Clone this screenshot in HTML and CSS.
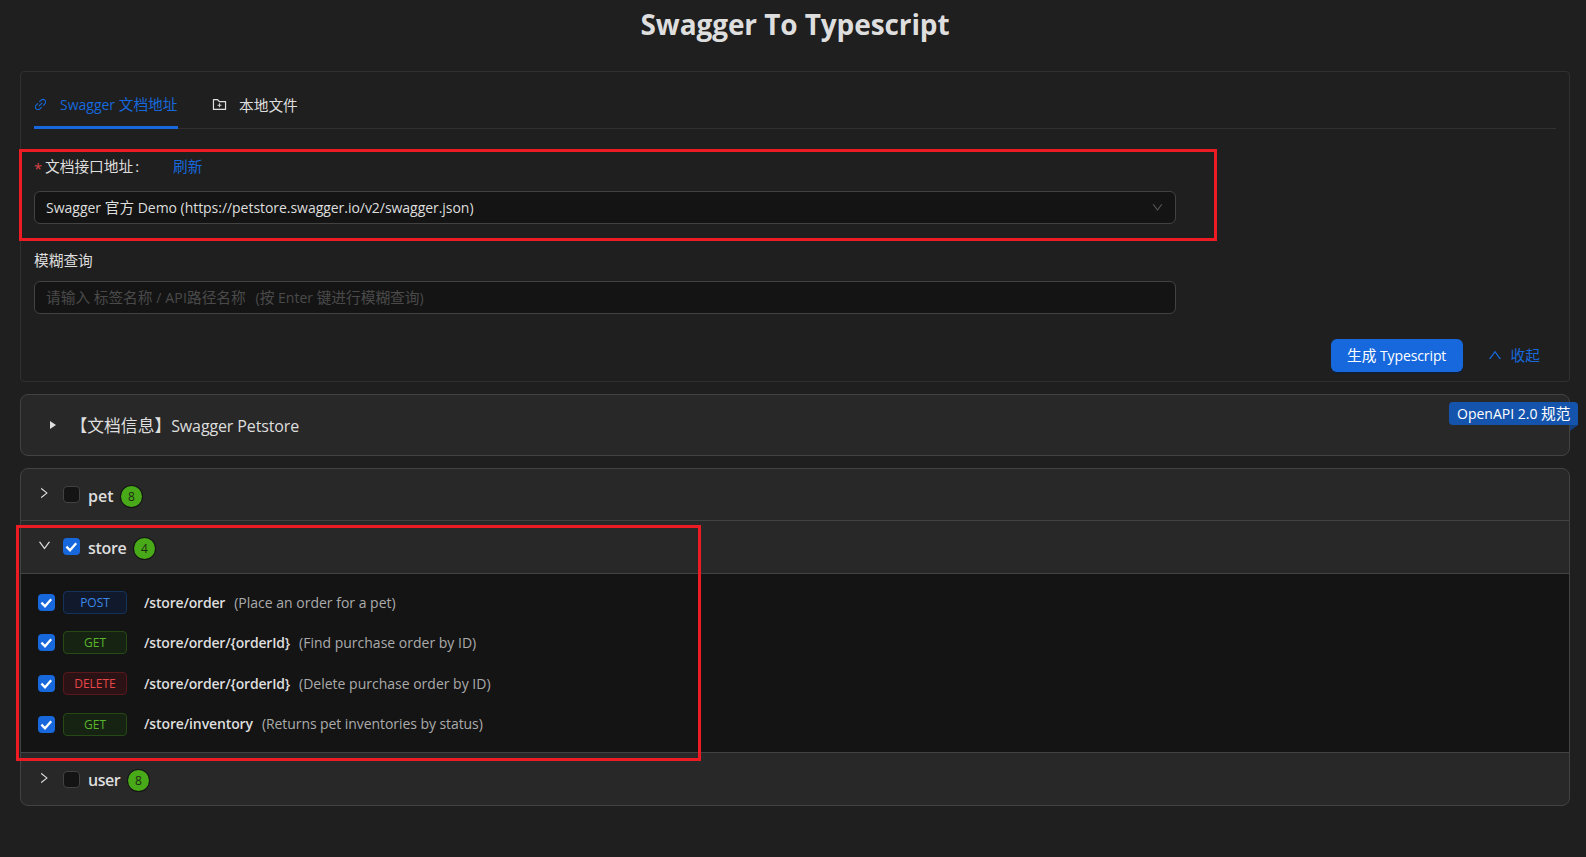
FILE: index.html
```html
<!DOCTYPE html>
<html lang="zh-CN">
<head>
<meta charset="utf-8">
<title>Swagger To Typescript</title>
<link rel="stylesheet" href="styles.css">
</head>
<body>
<svg class="sprite" aria-hidden="true">
  <symbol id="i-link" viewBox="0 0 1024 1024"><path d="M574 665.4a8.03 8.03 0 00-11.3 0L446.5 781.6c-53.8 53.8-144.6 59.5-204 0-59.5-59.5-53.8-150.2 0-204l116.2-116.2c3.1-3.1 3.1-8.2 0-11.3l-39.8-39.8a8.03 8.03 0 00-11.3 0L191.4 526.5c-84.6 84.6-84.6 221.5 0 306s221.5 84.6 306 0l116.2-116.2c3.1-3.1 3.1-8.2 0-11.3L574 665.4zm258.6-474c-84.6-84.6-221.5-84.6-306 0L410.3 307.6a8.03 8.03 0 000 11.3l39.7 39.7c3.1 3.1 8.2 3.1 11.3 0l116.2-116.2c53.8-53.8 144.6-59.5 204 0 59.5 59.5 53.8 150.2 0 204L665.3 562.6a8.03 8.03 0 000 11.3l39.8 39.8c3.1 3.1 8.2 3.1 11.3 0l116.2-116.2c84.5-84.6 84.5-221.5 0-306.1zM610.1 372.3a8.03 8.03 0 00-11.3 0L372.3 598.7a8.03 8.03 0 000 11.3l39.6 39.6c3.1 3.1 8.2 3.1 11.3 0l226.4-226.4c3.1-3.1 3.1-8.2 0-11.3l-39.5-39.6z"/></symbol>
  <symbol id="i-folder" viewBox="0 0 1024 1024"><path d="M484 443.1V528h-84.5c-4.1 0-7.5 3.1-7.5 7v42c0 3.8 3.4 7 7.5 7H484v84.9c0 3.9 3.2 7.1 7 7.1h42c3.9 0 7-3.2 7-7.1V584h84.5c4.1 0 7.5-3.2 7.5-7v-42c0-3.9-3.4-7-7.5-7H540v-84.9c0-3.9-3.1-7.1-7-7.1h-42c-3.8 0-7 3.2-7 7.1zm396-144.7H521L403.7 186.2a8.15 8.15 0 00-5.5-2.2H144c-17.7 0-32 14.3-32 32v592c0 17.7 14.3 32 32 32h736c17.7 0 32-14.3 32-32V330.4c0-17.7-14.3-32-32-32zM840 768H184V256h188.5l119.6 114.4H840V768z"/></symbol>
  <symbol id="i-down" viewBox="0 0 1024 1024"><path d="M884 256h-75c-5.1 0-9.9 2.5-12.9 6.6L512 654.2 227.9 262.6c-3-4.1-7.8-6.6-12.9-6.6h-75c-6.5 0-10.3 7.4-6.5 12.7l352.6 486.1c12.8 17.6 39 17.6 51.7 0l352.6-486.1c3.9-5.3.1-12.7-6.4-12.7z"/></symbol>
  <symbol id="i-right" viewBox="0 0 1024 1024"><path d="M765.7 486.8L314.9 134.7A7.97 7.97 0 00302 141v77.3c0 4.9 2.3 9.6 6.1 12.6l360 281.1-360 281.1c-3.9 3-6.1 7.7-6.1 12.6V883c0 6.7 7.7 10.4 12.9 6.3l450.8-352.1a31.96 31.96 0 000-50.4z"/></symbol>
  <symbol id="i-check" viewBox="0 0 17 17"><path d="M3.4 8.6l3.6 3.6 6.2-7" fill="none" stroke="#fff" stroke-width="2.3"/></symbol>
</svg>

<h1 class="title">Swagger To Typescript</h1>

<main class="page">
  <section class="form-card">
    <nav class="tabs">
      <a class="tab tab-active"><svg class="icon-link"><use href="#i-link"/></svg><span><span class="lat">Swagger </span>文档地址</span></a>
      <a class="tab"><svg class="icon-folder"><use href="#i-folder"/></svg><span>本地文件</span></a>
    </nav>
    <div class="field-label"><span class="required">*</span><span class="label-text">文档接口地址<span class="colon">:</span></span><a class="link">刷新</a></div>
    <div class="control select"><span><span class="lat">Swagger </span>官方<span class="lat demo"> Demo (https://petstore.swagger.io/v2/swagger.json)</span></span><svg class="select-arrow"><use href="#i-down"/></svg></div>
    <div class="field-label second">模糊查询</div>
    <div class="control placeholder"><span>请输入<span class="lat"> </span>标签名称<span class="lat api"> / API</span>路径名称<span class="paren">(</span>按<span class="lat"> Enter </span>键进行模糊查询<span class="lat">)</span></span></div>
    <div class="actions">
      <button class="primary">生成<span class="lat script"> Typescript</span></button>
      <a class="collapse-link"><svg class="icon-up"><use href="#i-down"/></svg><span>收起</span></a>
    </div>
  </section>

  <section class="info-card">
    <span class="caret"></span>
    <span class="info-title">【文档信息】<span class="lat info-lat">Swagger Petstore</span></span>
    <div class="ribbon"><span class="lat">OpenAPI 2.0 </span>规范</div>
  </section>

  <section class="groups">
    <header class="group-head pet">
      <svg class="arrow"><use href="#i-right"/></svg><span class="checkbox"></span>
      <span class="group-name name-pet">pet</span><span class="badge">8</span>
    </header>
    <header class="group-head store">
      <svg class="arrow arrow-open"><use href="#i-down"/></svg><span class="checkbox checked"><svg><use href="#i-check"/></svg></span>
      <span class="group-name name-store">store</span><span class="badge">4</span>
    </header>
    <div class="group-body">
      <div class="api-row"><span class="checkbox checked"><svg><use href="#i-check"/></svg></span><span class="tag post">POST</span><span class="path">/store/order</span><span class="desc">(Place an order for a pet)</span></div>
      <div class="api-row"><span class="checkbox checked"><svg><use href="#i-check"/></svg></span><span class="tag get">GET</span><span class="path">/store/order/{orderId}</span><span class="desc">(Find purchase order by ID)</span></div>
      <div class="api-row"><span class="checkbox checked"><svg><use href="#i-check"/></svg></span><span class="tag delete">DELETE</span><span class="path">/store/order/{orderId}</span><span class="desc">(Delete purchase order by ID)</span></div>
      <div class="api-row"><span class="checkbox checked"><svg><use href="#i-check"/></svg></span><span class="tag get">GET</span><span class="path path-inventory">/store/inventory</span><span class="desc desc-inventory">(Returns pet inventories by status)</span></div>
    </div>
    <header class="group-head user">
      <svg class="arrow"><use href="#i-right"/></svg><span class="checkbox"></span>
      <span class="group-name name-user">user</span><span class="badge">8</span>
    </header>
  </section>
</main>

<div class="highlight highlight-url"></div>
<div class="highlight highlight-store"></div>
</body>
</html>
```
FILE: styles.css
```css
* { box-sizing: border-box; }
html, body { height: 100%; }
body {
  margin: 0;
  overflow: hidden;
  background: #1f1f1f;
  color: #dedede;
  font-family: "Open Sans", "Noto Sans CJK SC", sans-serif;
  font-size: 14.7px;
  line-height: 20px;
  white-space: nowrap;
}
svg { display: block; fill: currentColor; flex: none; }
.sprite { position: absolute; width: 0; height: 0; }
.lat { font-size: 14px; white-space: pre; }

.title {
  margin: 0 0 0 4px;
  height: 71px;
  padding-top: 4px;
  font-size: 28px;
  line-height: 40px;
  font-weight: 700;
  text-align: center;
  letter-spacing: -0.1px;
}
.page { padding: 0 16px 0 20px; }

.form-card {
  height: 311px;
  border: 1px solid #303030;
  border-radius: 4px;
  padding: 10px 13px 0;
}
.tabs {
  display: flex;
  gap: 34px;
  height: 47px;
  border-bottom: 1px solid #303030;
}
.tab {
  display: flex;
  align-items: center;
  height: 47px;
  padding-bottom: 2px;
  color: #dedede;
}
.tab-active { color: #1668dc; border-bottom: 3px solid #1668dc; padding: 1px 0 0; width: 144px; }
.icon-link { width: 15px; height: 15px; margin: 0 12px 0 -1px; }
.icon-folder { width: 17px; height: 17px; margin: 0 11px 0 -1px; }

.field-label {
  display: flex;
  align-items: center;
  height: 22px;
  margin-top: 26px;
}
.required { color: #dc4446; width: 11px; padding-top: 4px; line-height: 18px; }
.label-text { width: 128px; }
.colon { margin-left: 2px; }
.link, .collapse-link { color: #1668dc; }
.second { margin-top: 25px; }
.control {
  display: flex;
  align-items: center;
  justify-content: space-between;
  width: 1142px;
  height: 33px;
  padding: 0 11px;
  border: 1px solid #424242;
  border-radius: 6px;
  background: #141414;
}
.select { margin-top: 14px; }
.demo { letter-spacing: -0.04px; }
.select-arrow { width: 13px; height: 13px; color: #555; }
.placeholder { margin-top: 10px; color: #4a4a4a; }
.api { letter-spacing: 0.15px; }
.paren { display: inline-block; width: 14px; text-align: right; font-size: 14px; }
.actions {
  display: flex;
  justify-content: flex-end;
  align-items: center;
  gap: 24px;
  margin: 25px 16px 0 0;
}
.primary {
  width: 132px;
  height: 33px;
  padding: 0;
  border: 0;
  border-radius: 6px;
  background: #1668dc;
  color: #fff;
  font: inherit;
  box-shadow: 0 2px 0 rgba(0, 30, 90, .35);
}
.script { letter-spacing: -0.1px; }
.collapse-link { display: flex; align-items: center; gap: 8px; padding-bottom: 2px; }
.icon-up { width: 16px; height: 16px; transform: scaleY(-1); }

.info-card {
  position: relative;
  display: flex;
  align-items: center;
  height: 62px;
  margin-top: 12px;
  padding-left: 29px;
  border: 1px solid #424242;
  border-radius: 8px;
  background: #282828;
}
.caret {
  border-left: 6px solid #dedede;
  border-top: 4.5px solid transparent;
  border-bottom: 4.5px solid transparent;
  margin-top: -1px;
}
.info-title { margin-left: 14.5px; font-size: 16.8px; line-height: 24px; padding-top: 2px; }
.info-lat { font-size: 16px; letter-spacing: -0.13px; }
.ribbon {
  position: absolute;
  top: 7px;
  right: -9px;
  width: 129px;
  height: 23px;
  line-height: 22px;
  padding-left: 8px;
  border-radius: 4px 4px 0 4px;
  background: #1554ad;
  color: #fff;
}
.ribbon::after {
  content: "";
  position: absolute;
  top: 23px;
  right: 0;
  border-top: 6px solid #10407f;
  border-right: 8px solid transparent;
}

.groups {
  height: 338px;
  margin-top: 12px;
  border: 1px solid #424242;
  border-radius: 8px;
  overflow: hidden;
  background: #282828;
}
.group-head { display: flex; align-items: flex-start; padding: 17px 0 0 16px; }
.pet { height: 51px; }
.store { height: 53px; border-top: 1px solid #424242; padding-top: 17px; }
.user { height: 53px; border-top: 1px solid #424242; padding-top: 18px; }
.arrow { width: 14px; height: 14px; margin-right: 12px; }
.arrow-open { width: 15px; height: 15px; margin-left: -0.5px; margin-right: 11.5px; }
.checkbox {
  width: 17px;
  height: 17px;
  flex: none;
  border: 1px solid #424242;
  border-radius: 4px;
  background: #141414;
}
.checkbox.checked { border: 0; background: #1668dc; }
.checkbox svg { width: 17px; height: 17px; }
.group-name { margin: -1px 0 0 8px; font-size: 16px; font-weight: 600; line-height: 22px; }
.name-pet { width: 33px; }
.name-store { width: 46px; letter-spacing: -0.3px; }
.name-user { width: 40px; letter-spacing: -0.5px; }
.badge {
  width: 21px;
  height: 21px;
  border-radius: 50%;
  background: #49aa19;
  color: #1c2a14;
  box-shadow: 0 0 0 1px #141414;
  font-size: 12px;
  line-height: 21px;
  text-align: center;
}
.user .group-name { margin-top: -2px; }
.user .badge { margin-top: -1px; }

.group-body {
  height: 179px;
  border-top: 1px solid #424242;
  padding: 8px 0 0 17px;
  background: #141414;
}
.api-row { display: flex; align-items: center; height: 40.67px; }
.api-row:first-child .path, .api-row:first-child .desc { padding-top: 1px; }
.tag {
  width: 64px;
  height: 23px;
  margin: 0 17px 0 8px;
  border: 1px solid;
  border-radius: 4px;
  font-size: 12px;
  line-height: 21px;
  text-align: center;
}
.post { color: #3c89e8; background: #111a2c; border-color: #15325b; }
.get { color: #5ab52c; background: #162312; border-color: #274916; }
.delete { color: #e84749; background: #2a1215; border-color: #58181c; }
.path { font-size: 14px; font-weight: 600; letter-spacing: -0.18px; }
.path-inventory { letter-spacing: -0.12px; }
.desc { margin-left: 9px; font-size: 14px; color: #ababab; }
.desc-inventory { letter-spacing: -0.07px; }

.highlight { position: absolute; border: 3px solid #ed1c24; }
.highlight-url { left: 19px; top: 149px; width: 1198px; height: 92px; }
.highlight-store { left: 16px; top: 525px; width: 685px; height: 236px; }
```
